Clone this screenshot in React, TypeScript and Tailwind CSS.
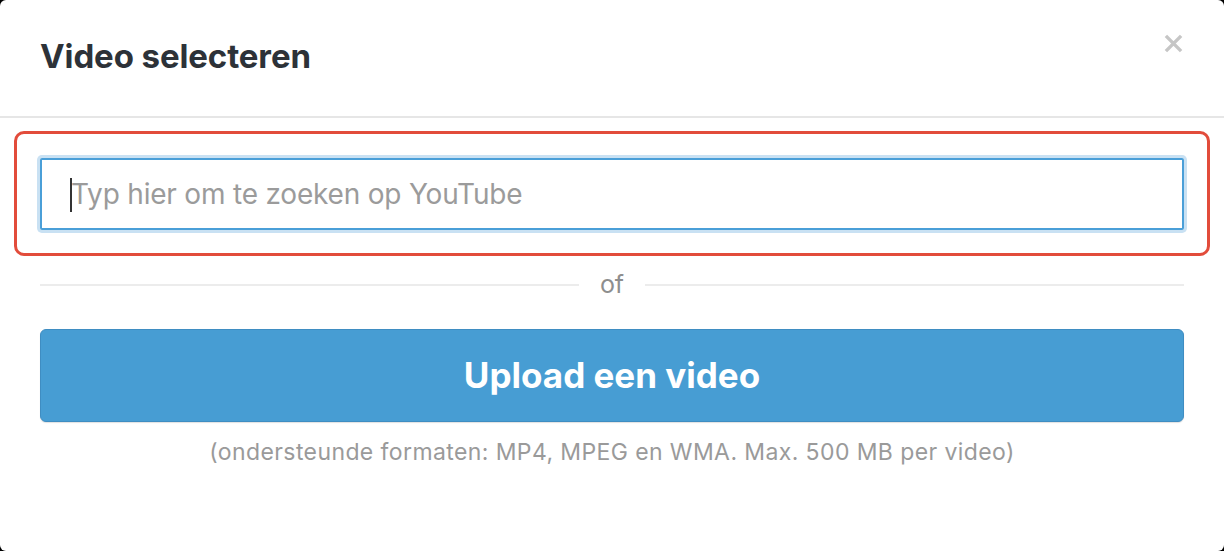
export default function App() {
  return (
    <div className="bg-black h-[551px] w-[1224px]" style={{ fontFamily: 'Inter, Lato, sans-serif' }}>
      <div className="bg-white h-full w-full rounded-[6px] flex flex-col">
        {/* Header */}
        <div className="h-[118px] border-b-2 border-[#e6e6e6] flex items-center justify-between pl-10 pr-[40px] pb-1">
          <h2 className="text-[33px] font-bold text-[#2d3238] leading-none tracking-[-0.1px]">Video selecteren</h2>
          <button className="self-start mt-[32px] w-[22px] h-[22px] flex items-center justify-center text-[#c6c6c6]">
            <svg viewBox="0 0 20 20" className="w-[19px] h-[19px]" fill="none" stroke="currentColor" strokeWidth="3.6" strokeLinecap="butt">
              <path d="M2 2 L18 18 M18 2 L2 18" />
            </svg>
          </button>
        </div>

        {/* Search (highlighted) */}
        <div className="px-[14px] pt-[13px]">
          <div className="border-[3px] border-[#e24c3b] rounded-[10px] px-[23px] pt-[24px] pb-[23px]">
            <div className="relative h-[72px] border-2 border-[#4a9fd8] rounded-[2px] shadow-[0_0_0_3px_#c9e1f3] flex items-center pl-[29px]">
              <span className="absolute left-[28px] top-[18px] w-[2px] h-[34px] bg-[#333]" />
              <input
                className="w-full outline-none text-[28px] tracking-[-0.2px] text-[#333] placeholder:text-[#9b9b9b] bg-transparent"
                placeholder="Typ hier om te zoeken op YouTube"
              />
            </div>
          </div>
        </div>

        {/* Divider */}
        <div className="px-10 mt-[17px] flex items-center gap-[21px]">
          <div className="flex-1 h-[2px] bg-[#ececec]" />
          <span className="text-[25px] text-[#8e8e8e] leading-none -mt-[1px]">of</span>
          <div className="flex-1 h-[2px] bg-[#ececec]" />
        </div>

        {/* Upload button */}
        <div className="px-10 mt-[32px]">
          <button className="w-full h-[93px] bg-[#479dd3] border border-[#3f8dc2] rounded-[6px] shadow-[0_1px_1px_rgba(0,0,0,0.12)] text-white text-[35px] font-bold">
            Upload een video
          </button>
        </div>

        <p className="mt-[13px] text-center text-[23px] tracking-[0.4px] text-[#9a9a9a]">
          (ondersteunde formaten: MP4, MPEG en WMA. Max. 500 MB per video)
        </p>
      </div>
    </div>
  );
}
